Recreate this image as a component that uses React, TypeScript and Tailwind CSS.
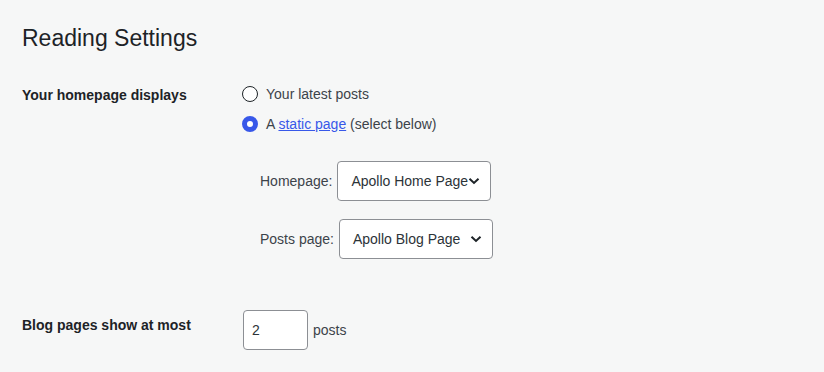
import React from "react";

function Chevron() {
  return (
    <svg width="12" height="8" viewBox="0 0 12 8" className="absolute right-[10px] top-1/2 -translate-y-1/2" aria-hidden>
      <path d="M1.5 1.8 L6 6 L10.5 1.8" fill="none" stroke="#1d2327" strokeWidth="2" />
    </svg>
  );
}

function Select({ value }: { value: string }) {
  return (
    <div className="relative flex h-[40px] w-[154px] items-center rounded-[4px] border border-[#8c8f94] bg-white pl-[13px] text-[14px] text-[#2c3338] whitespace-nowrap">
      {value}
      <Chevron />
    </div>
  );
}

export default function App() {
  return (
    <div
      className="min-h-[372px] w-[824px] bg-[#f6f7f7] pl-[22px] text-[14px] text-[#1d2327]"
      style={{ fontFamily: '"Liberation Sans", Arial, sans-serif' }}
    >
      <h1 className="pt-[24px] text-[23px] leading-[29px] font-normal text-[#1d2327]">Reading Settings</h1>

      <div className="mt-[26px] flex">
        <div className="w-[220px] pt-[7px] text-[14px] leading-[18px] font-bold text-[#1d2327]">Your homepage displays</div>
        <div className="flex flex-col">
          <label className="flex h-[30px] items-center gap-[8px] text-[#3c434a]">
            <span className="h-[16px] w-[16px] rounded-full border border-[#1d2327] bg-white" />
            Your latest posts
          </label>
          <label className="flex h-[30px] items-center gap-[8px] text-[#3c434a]">
            <span className="box-border h-[16px] w-[16px] rounded-full border-[5px] border-[#3858e9] bg-white" />
            <span>
              A <span className="text-[#3858e9] underline">static page</span> (select below)
            </span>
          </label>
          <div className="mt-[22px] flex flex-col gap-[18px] pl-[18px]">
            <div className="flex items-center gap-[5px] text-[#3c434a]">
              <span>Homepage:</span>
              <Select value="Apollo Home Page" />
            </div>
            <div className="flex items-center gap-[5px] text-[#3c434a]">
              <span>Posts page:</span>
              <Select value="Apollo Blog Page" />
            </div>
          </div>
        </div>
      </div>

      <div className="mt-[51px] flex">
        <div className="w-[221px] pt-[6px] text-[14px] leading-[18px] font-bold text-[#1d2327]">Blog pages show at most</div>
        <div className="flex items-center gap-[5px] text-[#3c434a]">
          <div className="flex h-[40px] w-[65px] items-center rounded-[4px] border border-[#8c8f94] bg-white pl-[8px] text-[14px] text-[#2c3338]">
            2
          </div>
          <span>posts</span>
        </div>
      </div>
    </div>
  );
}
